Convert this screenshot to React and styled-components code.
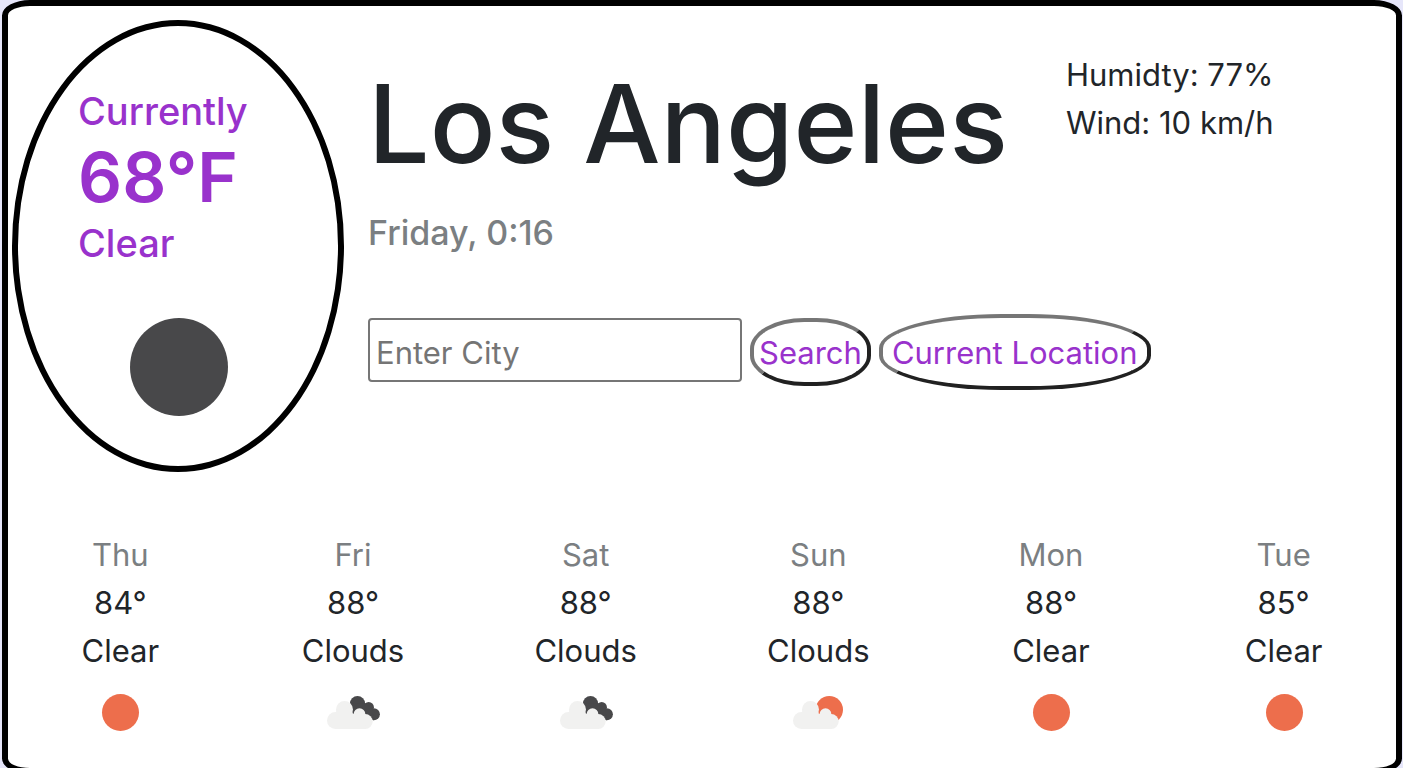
import React from "react";
import styled, { createGlobalStyle } from "styled-components";

const GlobalStyle = createGlobalStyle`
  * { box-sizing: border-box; }
  html { scrollbar-width: none; }
  body {
    margin: 0;
    background: #e6e6fa;
    color: #212529;
    font-family: Inter, "Liberation Sans", sans-serif;
    font-size: 31px;
    line-height: 48px;
  }
`;

const Card = styled.main`
  margin: 0 1px 0 2px;
  border: 6px solid #000;
  border-radius: 2%;
  background: #fff;
  overflow: hidden;
`;

const Overview = styled.section`
  display: grid;
  grid-template-columns: minmax(0, 1fr) minmax(0, 2fr) minmax(0, 1fr);
  margin: 0 -4px;
  padding-top: 14px;
`;

const Current = styled.div`
  margin: 0 9px 0 8px;
  padding: 61px 58px 50px 60px;
  border: 6px solid #000;
  border-radius: 50%;
  color: #9932cc;
  font-size: 38px;
  font-weight: 500;
`;

const Temperature = styled.div`
  font-size: 69px;
  font-weight: 600;
  line-height: 84px;
`;

const Moon = styled.svg`
  display: block;
  width: 98px;
  height: 98px;
  margin: 51px auto 0;
`;

const Place = styled.div`
  padding: 31px 15px 0;
  white-space: nowrap;
`;

const City = styled.h1`
  margin: 0 0 14px;
  font-size: 109px;
  font-weight: 500;
  line-height: 144px;
`;

const Moment = styled.h2`
  margin: 0 0 57px;
  color: #7b7f82;
  font-size: 34px;
  font-weight: 500;
  line-height: 48px;
`;

const SearchForm = styled.form`
  display: flex;
  align-items: baseline;
  gap: 8px;
`;

const CityInput = styled.input`
  flex: none;
  width: 374px;
  height: 64px;
  padding: 6px 6px 0;
  border: 2px solid #767676;
  border-radius: 4px;
  background: #fff;
  color: #212529;
  font: inherit;
  &::placeholder { color: #757575; opacity: 1; }
`;

const OvalButton = styled.button`
  flex: none;
  padding: ${(p) => (p.$wide ? "11px 9px 9px" : "7px 5px 5px")};
  border: 4px solid;
  border-color: #767676 #212121 #212121 #767676;
  border-radius: 45%;
  background: #fff;
  color: #9932cc;
  font: inherit;
`;

const Details = styled.div`
  padding: 31px 15px 0;
`;

const Forecast = styled.section`
  display: grid;
  grid-template-columns: repeat(6, minmax(0, 1fr));
  margin: 0 -4px;
  padding: 59px 0 17px;
  text-align: center;
`;

const DayName = styled.div`
  color: #7b7f82;
`;

const WeatherIcon = styled.svg`
  display: block;
  width: 76px;
  height: 76px;
  margin: 0 auto;
`;

const Cloud = () => (
  <g fill="#f1f1f0">
    <circle cx="20.5" cy="45.5" r="8.5" />
    <circle cx="29.5" cy="34.5" r="8.5" />
    <circle cx="44.5" cy="39" r="5.8" />
    <circle cx="50.2" cy="46.5" r="7.5" />
    <path d="M21 37 L23 34 L36 34 L38 39 L44 36 L50 41 L51 54 L20.5 54 Z" />
  </g>
);

const DarkCloud = () => (
  <g fill="#48484a">
    <circle cx="42.5" cy="28.7" r="7.6" />
    <circle cx="53.7" cy="32.2" r="5.2" />
    <circle cx="58.9" cy="39.2" r="6" />
    <path d="M36 29 L50 28 L57 34 L59 45.2 L52 44 L36 38 Z" />
  </g>
);

function Icon({ kind }) {
  return (
    <WeatherIcon viewBox="0 0 76 76" aria-hidden="true">
      {kind === "sun" && <circle cx="38.5" cy="37.5" r="18.5" fill="#ed6e4c" />}
      {kind === "cloudy" && <DarkCloud />}
      {kind === "partly" && <circle cx="49.3" cy="34.7" r="13.7" fill="#ed6e4c" />}
      {kind === "partly" && <g transform="translate(1 0)"><Cloud /></g>}
      {kind === "cloudy" && <Cloud />}
    </WeatherIcon>
  );
}

const days = [
  { name: "Thu", high: 84, sky: "Clear", icon: "sun" },
  { name: "Fri", high: 88, sky: "Clouds", icon: "cloudy" },
  { name: "Sat", high: 88, sky: "Clouds", icon: "cloudy" },
  { name: "Sun", high: 88, sky: "Clouds", icon: "partly" },
  { name: "Mon", high: 88, sky: "Clear", icon: "sun" },
  { name: "Tue", high: 85, sky: "Clear", icon: "sun" },
];

export default function App() {
  return (
    <>
      <GlobalStyle />
      <Card>
        <Overview>
          <Current>
            <div>Currently</div>
            <Temperature>68°F</Temperature>
            <div>Clear</div>
            <Moon viewBox="0 0 98 98" aria-hidden="true">
              <circle cx="49" cy="49" r="49" fill="#48484a" />
            </Moon>
          </Current>
          <Place>
            <City>Los Angeles</City>
            <Moment>Friday, 0:16</Moment>
            <SearchForm onSubmit={(e) => e.preventDefault()}>
              <CityInput type="text" placeholder="Enter City" aria-label="Enter City" />
              <OvalButton type="submit">Search</OvalButton>
              <OvalButton type="button" $wide>Current Location</OvalButton>
            </SearchForm>
          </Place>
          <Details>
            <div>Humidty: 77%</div>
            <div>Wind: 10 km/h</div>
          </Details>
        </Overview>
        <Forecast>
          {days.map((day) => (
            <div key={day.name}>
              <DayName>{day.name}</DayName>
              <div>{day.high}°</div>
              <div>{day.sky}</div>
              <Icon kind={day.icon} />
            </div>
          ))}
        </Forecast>
      </Card>
    </>
  );
}
